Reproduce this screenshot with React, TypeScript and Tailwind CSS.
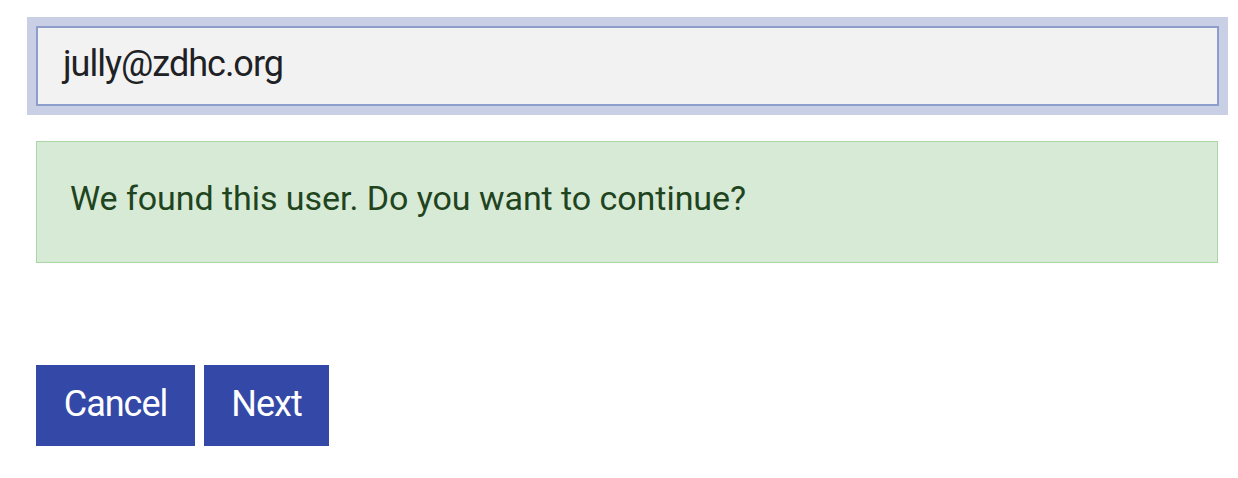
import React from "react";

export default function App() {
  return (
    <div
      className="w-[1238px] h-[478px] bg-white pt-[17px] pl-[27px] pr-[10px]"
      style={{ fontFamily: 'Roboto, "Liberation Sans", Arial, sans-serif' }}
    >
      <div className="p-[9px] bg-[#c9cfe4]">
        <div className="h-[80px] border-2 border-[#8d9dcc] bg-[#f2f2f2] flex items-center pl-[25px] pb-[4px]">
          <span className="text-[36px] leading-[42px] tracking-[-1px] text-[#202124]">jully@zdhc.org</span>
        </div>
      </div>
      <div className="mt-[26px] ml-[9px] mr-[10px] h-[122px] border border-[#acd6a6] bg-[#d7ead5] pl-[33px] pt-[36px]">
        <p className="text-[34px] leading-[40px] tracking-[-0.05px] text-[#1f4420]">We found this user. Do you want to continue?</p>
      </div>
      <div className="mt-[102px] ml-[9px] flex gap-[9px]">
        <button className="h-[81px] w-[159px] bg-[#3449a7] text-white text-[36px] leading-[42px] tracking-[-1px] flex items-center justify-center pb-[4px]">
          Cancel
        </button>
        <button className="h-[81px] w-[125px] bg-[#3449a7] text-white text-[36px] leading-[42px] tracking-[-1px] flex items-center justify-center pb-[4px]">
          Next
        </button>
      </div>
    </div>
  );
}
